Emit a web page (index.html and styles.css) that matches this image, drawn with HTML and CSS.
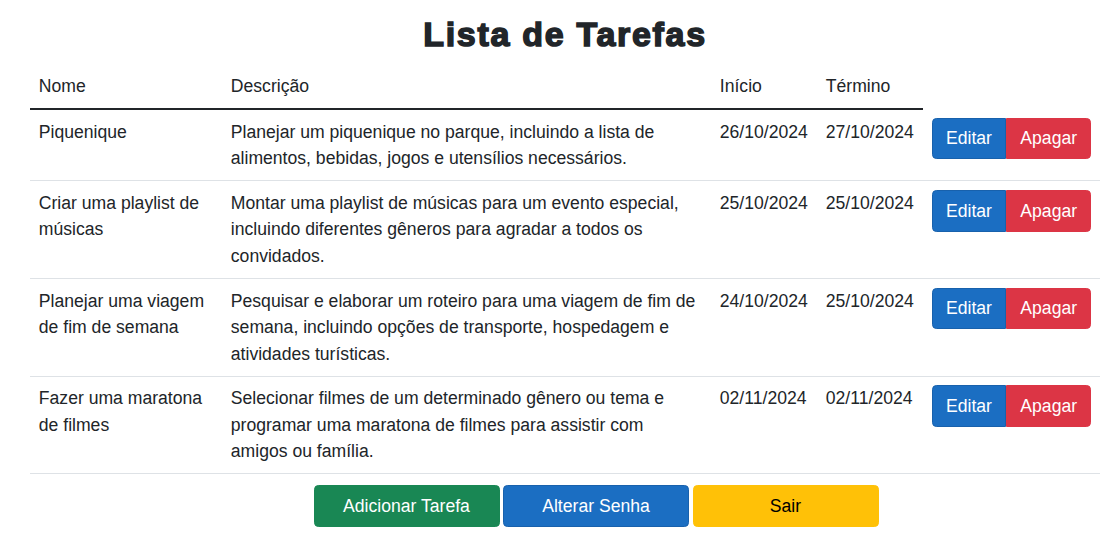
FILE: index.html
```html
<!DOCTYPE html>
<html lang="pt-BR">
<head>
<meta charset="utf-8">
<title>Lista de Tarefas</title>
<link rel="stylesheet" href="styles.css">
</head>
<body>
<main class="container">
  <h1 class="title">Lista de Tarefas</h1>
  <table class="table">
    <colgroup>
      <col class="c-nome">
      <col class="c-desc">
      <col class="c-data">
      <col class="c-data">
      <col class="c-acoes">
    </colgroup>
    <thead>
      <tr>
        <th>Nome</th>
        <th>Descrição</th>
        <th>Início</th>
        <th>Término</th>
      </tr>
    </thead>
    <tbody>
      <tr>
        <td>Piquenique</td>
        <td>Planejar um piquenique no parque, incluindo a lista de alimentos, bebidas, jogos e utensílios necessários.</td>
        <td>26/10/2024</td>
        <td>27/10/2024</td>
        <td><div class="btn-group"><button class="btn btn-primary">Editar</button><button class="btn btn-danger">Apagar</button></div></td>
      </tr>
      <tr>
        <td>Criar uma playlist de músicas</td>
        <td>Montar uma playlist de músicas para um evento especial, incluindo diferentes gêneros para agradar a todos os convidados.</td>
        <td>25/10/2024</td>
        <td>25/10/2024</td>
        <td><div class="btn-group"><button class="btn btn-primary">Editar</button><button class="btn btn-danger">Apagar</button></div></td>
      </tr>
      <tr>
        <td>Planejar uma viagem de fim de semana</td>
        <td>Pesquisar e elaborar um roteiro para uma viagem de fim de semana, incluindo opções de transporte, hospedagem e atividades turísticas.</td>
        <td>24/10/2024</td>
        <td>25/10/2024</td>
        <td><div class="btn-group"><button class="btn btn-primary">Editar</button><button class="btn btn-danger">Apagar</button></div></td>
      </tr>
      <tr>
        <td>Fazer uma maratona de filmes</td>
        <td>Selecionar filmes de um determinado gênero ou tema e programar uma maratona de filmes para assistir com amigos ou família.</td>
        <td>02/11/2024</td>
        <td>02/11/2024</td>
        <td><div class="btn-group"><button class="btn btn-primary">Editar</button><button class="btn btn-danger">Apagar</button></div></td>
      </tr>
    </tbody>
  </table>
  <div class="actions">
    <button class="btn btn-wide btn-success">Adicionar Tarefa</button>
    <button class="btn btn-wide btn-primary">Alterar Senha</button>
    <button class="btn btn-wide btn-warning">Sair</button>
  </div>
</main>
</body>
</html>
```

FILE: styles.css
```css
* { box-sizing: border-box; }

html, body {
  margin: 0;
  padding: 0;
  background: #fff;
}

body {
  font-family: "Liberation Sans", Arial, sans-serif;
  font-size: 17.6px;
  line-height: 1.5;
  color: #212529;
}

.container {
  margin: 0 16px 0 30px;
}

.title {
  margin: 14px 0 9px;
  text-align: center;
  font-size: 34px;
  line-height: 1.2;
  font-weight: 700;
  letter-spacing: 1.7px;
  -webkit-text-stroke: 1.5px #212529;
  color: #212529;
}

.table {
  width: 100%;
  border-collapse: collapse;
  table-layout: fixed;
  margin-bottom: 11px;
  vertical-align: top;
}

.c-nome { width: 192px; }
.c-desc { width: 489px; }
.c-data { width: 106px; }
.c-acoes { width: auto; }

.table th,
.table td {
  padding: 8.8px;
  text-align: left;
  vertical-align: top;
  font-weight: 400;
}

.table th {
  border-bottom: 2px solid #212529;
}

.table td {
  border-bottom: 1px solid #dee2e6;
}

.btn {
  display: inline-block;
  font-family: inherit;
  font-size: 17.6px;
  line-height: 1.5;
  padding: 6.6px 13.2px;
  border: 1px solid transparent;
  border-radius: 4.4px;
  color: #fff;
  cursor: pointer;
  text-align: center;
}

.btn-group {
  display: inline-flex;
  vertical-align: top;
}

.btn-group .btn:first-child {
  border-top-right-radius: 0;
  border-bottom-right-radius: 0;
}

.btn-group .btn:last-child {
  border-top-left-radius: 0;
  border-bottom-left-radius: 0;
}

.btn-primary {
  background: #1b6ec2;
  border-color: #1861ac;
}

.btn-danger {
  background: #dc3545;
  border-color: #dc3545;
}

.btn-success {
  background: #198754;
  border-color: #198754;
}

.btn-warning {
  background: #ffc107;
  border-color: #ffc107;
  color: #000;
}

.actions {
  display: flex;
  justify-content: center;
  gap: 3.5px;
  padding-left: 62px;
}

.btn-wide {
  width: 186px;
}
```
